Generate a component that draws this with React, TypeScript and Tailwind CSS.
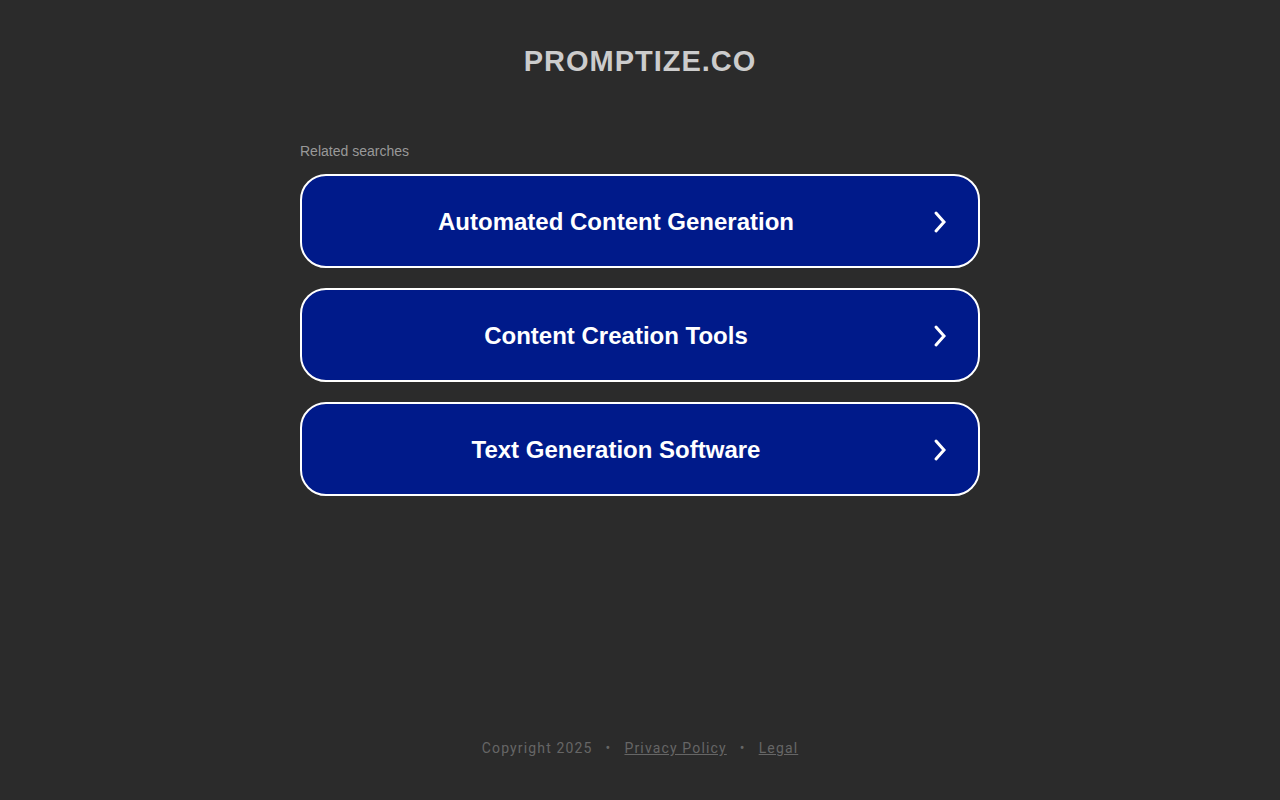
import React from "react";

const items = ["Automated Content Generation", "Content Creation Tools", "Text Generation Software"];

function Chevron() {
  return (
    <svg width="16" height="24" viewBox="0 0 16 24" fill="none" stroke="white" strokeWidth="3" strokeLinecap="round" strokeLinejoin="miter">
      <path d="M4 3 L12 12 L4 21" />
    </svg>
  );
}

export default function App() {
  return (
    <div className="w-full h-[800px] bg-[#2b2b2b] flex flex-col items-center" style={{ fontFamily: '"Liberation Sans", Arial, sans-serif' }}>
      <h1 className="mt-[43px] text-[29px] leading-[36px] font-bold tracking-[1px] text-[#cccccc]">PROMPTIZE.CO</h1>
      <div className="w-[680px] mt-[64px]">
        <div className="text-[14px] leading-[16px] text-[#999999]">Related searches</div>
        <div className="mt-[15px] flex flex-col gap-[20px]">
          {items.map((t) => (
            <div key={t} className="h-[94px] rounded-[26px] border-2 border-white bg-[#001a8a] flex items-center relative pt-[2px]">
              <span className="flex-1 text-center pr-[48px] text-[24px] font-bold text-white">{t}</span>
              <span className="absolute right-[30px] top-1/2 translate-y-[calc(-50%+1px)] flex"><Chevron /></span>
            </div>
          ))}
        </div>
      </div>
      <div className="mt-auto mb-[41px] flex items-center gap-[13px] text-[14px] tracking-[1.15px] text-[#666666]" style={{ fontFamily: 'Roboto, sans-serif' }}>
        <span>Copyright 2025</span>
        <span>•</span>
        <span className="underline">Privacy Policy</span>
        <span>•</span>
        <span className="underline">Legal</span>
      </div>
    </div>
  );
}
